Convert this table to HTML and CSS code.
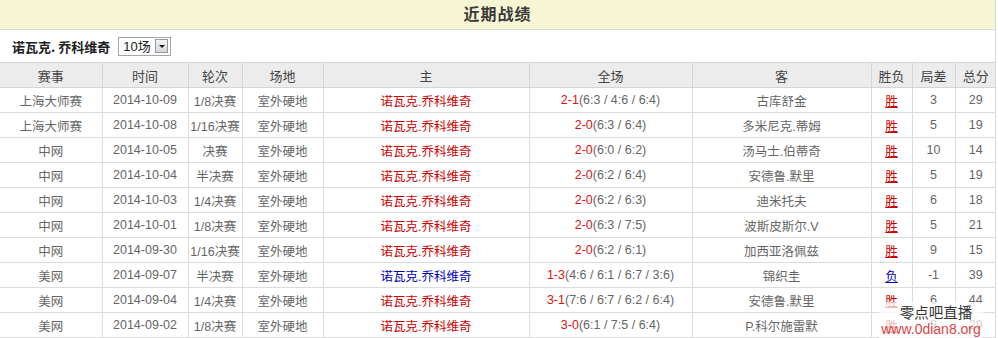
FILE: index.html
```html
<!DOCTYPE html>
<html lang="zh-CN">
<head>
<meta charset="utf-8">
<title>近期战绩</title>
<link rel="stylesheet" href="styles.css">
</head>
<body>
<div class="panel">
  <div class="title-bar">近期战绩</div>
  <div class="filter-row">
    <span class="player">诺瓦克. 乔科维奇</span>
    <div class="select">
      <span class="select-value">10场</span>
      <span class="select-btn"><span class="arrow"></span></span>
    </div>
  </div>
  <table class="records">
    <colgroup>
      <col class="c1"><col class="c2"><col class="c3"><col class="c4"><col class="c5">
      <col class="c6"><col class="c7"><col class="c8"><col class="c9"><col class="c10">
    </colgroup>
    <thead>
      <tr><th>赛事</th><th>时间</th><th>轮次</th><th>场地</th><th>主</th><th>全场</th><th>客</th><th>胜负</th><th>局差</th><th>总分</th></tr>
    </thead>
    <tbody>
      <tr><td>上海大师赛</td><td>2014-10-09</td><td>1/8决赛</td><td>室外硬地</td><td class="win-name">诺瓦克.乔科维奇</td><td><span class="score">2-1</span>(6:3 / 4:6 / 6:4)</td><td>古库舒金</td><td><span class="res win">胜</span></td><td>3</td><td>29</td></tr>
      <tr><td>上海大师赛</td><td>2014-10-08</td><td>1/16决赛</td><td>室外硬地</td><td class="win-name">诺瓦克.乔科维奇</td><td><span class="score">2-0</span>(6:3 / 6:4)</td><td>多米尼克.蒂姆</td><td><span class="res win">胜</span></td><td>5</td><td>19</td></tr>
      <tr><td>中网</td><td>2014-10-05</td><td>决赛</td><td>室外硬地</td><td class="win-name">诺瓦克.乔科维奇</td><td><span class="score">2-0</span>(6:0 / 6:2)</td><td>汤马士.伯蒂奇</td><td><span class="res win">胜</span></td><td>10</td><td>14</td></tr>
      <tr><td>中网</td><td>2014-10-04</td><td>半决赛</td><td>室外硬地</td><td class="win-name">诺瓦克.乔科维奇</td><td><span class="score">2-0</span>(6:2 / 6:4)</td><td>安德鲁.默里</td><td><span class="res win">胜</span></td><td>5</td><td>19</td></tr>
      <tr><td>中网</td><td>2014-10-03</td><td>1/4决赛</td><td>室外硬地</td><td class="win-name">诺瓦克.乔科维奇</td><td><span class="score">2-0</span>(6:2 / 6:3)</td><td>迪米托夫</td><td><span class="res win">胜</span></td><td>6</td><td>18</td></tr>
      <tr><td>中网</td><td>2014-10-01</td><td>1/8决赛</td><td>室外硬地</td><td class="win-name">诺瓦克.乔科维奇</td><td><span class="score">2-0</span>(6:3 / 7:5)</td><td>波斯皮斯尔.V</td><td><span class="res win">胜</span></td><td>5</td><td>21</td></tr>
      <tr><td>中网</td><td>2014-09-30</td><td>1/16决赛</td><td>室外硬地</td><td class="win-name">诺瓦克.乔科维奇</td><td><span class="score">2-0</span>(6:2 / 6:1)</td><td>加西亚洛佩兹</td><td><span class="res win">胜</span></td><td>9</td><td>15</td></tr>
      <tr><td>美网</td><td>2014-09-07</td><td>半决赛</td><td>室外硬地</td><td class="lose-name">诺瓦克.乔科维奇</td><td><span class="score">1-3</span>(4:6 / 6:1 / 6:7 / 3:6)</td><td>锦织圭</td><td><span class="res lose">负</span></td><td>-1</td><td>39</td></tr>
      <tr><td>美网</td><td>2014-09-04</td><td>1/4决赛</td><td>室外硬地</td><td class="win-name">诺瓦克.乔科维奇</td><td><span class="score">3-1</span>(7:6 / 6:7 / 6:2 / 6:4)</td><td>安德鲁.默里</td><td><span class="res win">胜</span></td><td>6</td><td>44</td></tr>
      <tr><td>美网</td><td>2014-09-02</td><td>1/8决赛</td><td>室外硬地</td><td class="win-name">诺瓦克.乔科维奇</td><td><span class="score">3-0</span>(6:1 / 7:5 / 6:4)</td><td>P.科尔施雷默</td><td><span class="res win">胜</span></td><td>9</td><td>29</td></tr>
    </tbody>
  </table>
  <div class="watermark">
    <div class="wm-name">零点吧直播</div>
    <div class="wm-url">www.0dian8.org</div>
  </div>
</div>
</body>
</html>
```

FILE: styles.css
```css
html, body {
  margin: 0;
  padding: 0;
  background: #fff;
}

body {
  font-family: "Liberation Sans", "Noto Sans CJK SC", sans-serif;
  font-size: 12.5px;
  color: #666;
}

.panel {
  position: relative;
  width: 995px;
  border-right: 1px solid #d8d8d8;
  height: 338px;
  overflow: hidden;
}

.title-bar {
  height: 29px;
  line-height: 29px;
  background: #f6f6d4;
  border-bottom: 1px solid #dcdcc8;
  text-align: center;
  font-size: 16px;
  font-weight: bold;
  color: #3a3a3a;
  letter-spacing: 1px;
}

.filter-row {
  height: 32px;
  display: flex;
  align-items: center;
  padding-left: 12px;
  gap: 8px;
}

.player {
  font-family: "Noto Sans CJK SC", sans-serif;
  font-size: 13px;
  font-weight: bold;
  color: #222;
}

.select {
  width: 45px;
  height: 17px;
  border: 1px solid #a5a5a5;
  display: flex;
  align-items: center;
  justify-content: space-between;
  padding: 0 2px 0 4px;
  background: #fff;
}

.select-value {
  font-size: 13px;
  color: #222;
  line-height: 17px;
}

.select-btn {
  width: 13px;
  height: 14px;
  border: 1px solid #999;
  background: linear-gradient(#f4f4f4, #d6d6d6);
  display: flex;
  align-items: center;
  justify-content: center;
  box-sizing: border-box;
}

.arrow {
  width: 0;
  height: 0;
  border-left: 3px solid transparent;
  border-right: 3px solid transparent;
  border-top: 3px solid #111;
}

.records {
  border-collapse: collapse;
  table-layout: fixed;
  width: 996px;
  margin-top: 0;
}

.c1 { width: 102px; }
.c2 { width: 86px; }
.c3 { width: 54px; }
.c4 { width: 81px; }
.c5 { width: 206px; }
.c6 { width: 163px; }
.c7 { width: 179px; }
.c8 { width: 41px; }
.c9 { width: 43px; }
.c10 { width: 41px; }

.records th,
.records td {
  border: 1px solid #dcdcdc;
  height: 24px;
  padding: 0;
  text-align: center;
  white-space: nowrap;
  font-weight: normal;
}

.records th:first-child,
.records td:first-child {
  border-left: none;
}

.records th:last-child,
.records td:last-child {
  border-right: none;
}

.records th {
  background: #ececec;
  color: #444;
  border-color: #d4d4d4;
  font-size: 13px;
}

.win-name { color: #cc0000; }
.lose-name { color: #0000bb; }
.score { color: #dd1111; }

.res {
  text-decoration: underline;
}
.res.win { color: #cc0000; }
.res.lose { color: #0000bb; }

.watermark {
  position: absolute;
  right: 12px;
  bottom: 0;
  width: 104px;
  height: 36px;
  background: rgba(255, 255, 255, 0.72);
  display: flex;
  flex-direction: column;
  align-items: center;
}

.wm-name {
  font-family: "Noto Sans CJK SC", sans-serif;
  font-size: 14.5px;
  line-height: 19px;
  color: #333;
  padding-left: 10px;
}

.wm-url {
  font-size: 14px;
  line-height: 16px;
  color: #dd4444;
}
```
